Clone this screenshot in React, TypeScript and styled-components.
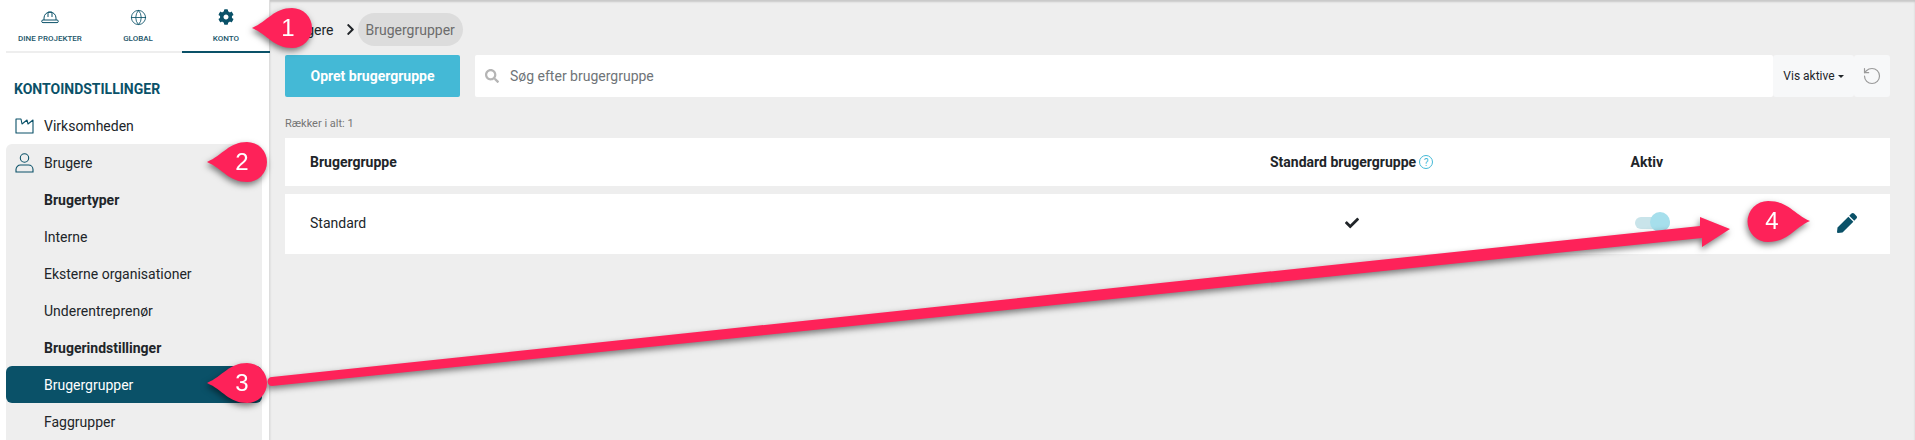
import React from 'react';
import styled, { createGlobalStyle } from 'styled-components';
import { FaCog, FaCheck, FaPen, FaSearch, FaChevronRight } from 'react-icons/fa';
import { Globe, RotateCcw } from 'lucide-react';

const PETROL = '#0a5168';
const TABLE_COLUMNS = '960px 163px 238px 1fr';

const GlobalStyle = createGlobalStyle`
  * { box-sizing: border-box; }
  html, body { margin: 0; padding: 0; height: 440px; overflow: hidden; }
  body { font-family: Roboto, "Liberation Sans", sans-serif; color: #212529; background: #eee; }
`;

const Page = styled.div`
  position: relative;
  display: flex;
  width: 1915px;
  height: 440px;
  overflow: hidden;
`;

const Sidebar = styled.aside`
  width: 270px;
  flex: none;
  background: #fff;
  border-right: 1px solid #ddd;
`;

const Tabs = styled.nav`
  display: grid;
  grid-template-columns: repeat(3, 1fr);
  height: 53px;
  margin: 0 -1px 0 6px;
`;

const Tab = styled.div<{ $active?: boolean }>`
  display: flex;
  flex-direction: column;
  align-items: center;
  padding-top: 6px;
  color: ${PETROL};
  border-bottom: 2px solid ${props => (props.$active ? PETROL : '#eee')};
`;

const TabIcon = styled.div`
  height: 22px;
  display: flex;
  align-items: center;
  justify-content: center;
`;

const TabLabel = styled.span`
  margin-top: 5px;
  font-size: 8px;
  line-height: 11px;
  font-weight: 500;
  color: #22566a;
`;

const SectionTitle = styled.h2`
  margin: 0;
  padding: 28px 0 0 14px;
  height: 54px;
  font-size: 14px;
  line-height: 17px;
  font-weight: 700;
  color: ${PETROL};
`;

const TopItem = styled.div`
  display: flex;
  align-items: center;
  gap: 10px;
  height: 37px;
  margin: 0 7px 0 6px;
  padding-left: 9px;
  font-size: 14px;
  color: #212529;
`;

const Group = styled.div`
  margin: 0 7px 0 6px;
  background: #eee;
  border-radius: 6px 6px 0 0;
  height: 300px;
`;

const GroupHead = styled(TopItem)`
  margin: 0;
`;

const SubItem = styled.div<{ $active?: boolean; $bold?: boolean }>`
  display: flex;
  align-items: center;
  height: 37px;
  padding-left: 38px;
  font-size: 14px;
  font-weight: ${props => (props.$bold ? 700 : 400)};
  color: ${props => (props.$active ? '#fff' : '#212529')};
  background: ${props => (props.$active ? PETROL : 'transparent')};
  border-radius: ${props => (props.$active ? '6px' : '0')};
`;

const Main = styled.main`
  flex: 1;
  min-width: 0;
  padding: 0 25px 0 15px;
  box-shadow: inset 0 2px 2px rgba(0, 0, 0, 0.16);
`;

const Breadcrumb = styled.div`
  display: flex;
  align-items: center;
  height: 33px;
  margin-top: 13px;
  font-size: 14px;
`;

const CrumbSeparator = styled.span`
  display: flex;
  margin: 0 1px 0 10px;
  color: #212529;
`;

const CrumbPill = styled.span`
  display: flex;
  align-items: center;
  height: 33px;
  padding: 0 8px;
  border-radius: 17px;
  background: #dcdcdc;
  color: #6c6c6c;
`;

const Toolbar = styled.div`
  display: flex;
  height: 42px;
  margin-top: 9px;
`;

const CreateButton = styled.button`
  width: 175px;
  border: 0;
  border-radius: 2px;
  margin-right: 15px;
  background: #44b9d6;
  color: #fff;
  font: 700 14px Roboto, sans-serif;
`;

const SearchBox = styled.div`
  flex: 1;
  display: flex;
  align-items: center;
  gap: 11px;
  padding-left: 10px;
  background: #fff;
  border-radius: 2px;
  font-size: 14px;
  color: #6f7478;
`;

const FilterButton = styled.div`
  display: flex;
  align-items: center;
  justify-content: center;
  gap: 3px;
  width: 81px;
  background: #f7f8f9;
  font-size: 12px;
  border-radius: 3px;
  color: #212529;
`;

const Caret = styled.span`
  width: 0;
  height: 0;
  border-left: 3px solid transparent;
  border-right: 3px solid transparent;
  border-top: 3px solid #212529;
`;

const ResetButton = styled.div`
  display: flex;
  align-items: center;
  justify-content: center;
  width: 36px;
  background: #f7f8f9;
  border-radius: 3px;
  color: #9a9a9a;
`;

const RowCount = styled.div`
  height: 41px;
  padding-top: 20px;
  font-size: 11px;
  line-height: 14px;
  color: #757575;
`;

const TableRow = styled.div<{ $height: number }>`
  display: grid;
  grid-template-columns: ${TABLE_COLUMNS};
  align-items: center;
  height: ${props => props.$height}px;
  margin-bottom: 8px;
  padding-left: 25px;
  background: #fff;
  font-size: 14px;
`;

const BodyRow = styled(TableRow)`
  padding-bottom: 2px;
`;

const HeadCell = styled.div`
  font-weight: 700;
`;

const HeadInfo = styled.div`
  display: flex;
  align-items: center;
  justify-content: space-between;
  font-weight: 700;
  white-space: nowrap;
`;

const HelpBadge = styled.span`
  display: flex;
  align-items: center;
  justify-content: center;
  width: 14px;
  height: 14px;
  border: 1.5px solid #44b9d6;
  border-radius: 50%;
  color: #44b9d6;
  font-size: 10px;
  font-weight: 400;
`;

const ActiveHead = styled.div`
  display: flex;
  justify-content: flex-end;
  padding-right: 8px;
  font-weight: 700;
`;

const CheckCell = styled.div`
  display: flex;
  justify-content: center;
  color: #212529;
`;

const ToggleCell = styled.div`
  display: flex;
  justify-content: flex-end;
  padding-right: 1px;
`;

const Toggle = styled.div`
  position: relative;
  width: 35px;
  height: 12px;
  border-radius: 6px;
  background: #c9e4ea;
  &::after {
    content: '';
    position: absolute;
    right: 0;
    top: -5px;
    width: 20px;
    height: 20px;
    border-radius: 50%;
    background: #a6dfec;
  }
`;

const EditCell = styled.div`
  display: flex;
  justify-content: flex-end;
  padding-right: 33px;
  color: ${PETROL};
`;

const Annotations = styled.svg`
  position: absolute;
  inset: 0;
  pointer-events: none;
  filter: drop-shadow(-1px 3px 3px rgba(0, 0, 0, 0.5));
`;

const PinNumber = styled.text`
  fill: #fff;
  font-family: "Liberation Sans", Arial, sans-serif;
  font-size: 24px;
  text-anchor: middle;
`;

const PIN_RED = '#fe2259';

const HelmetIcon = () => (
  <svg width="18" height="16" viewBox="0 0 18 16" fill="none" stroke={PETROL} strokeWidth="1">
    <path d="M3 11V9a6 6 0 0 1 12 0v2" />
    <path d="M7 3.5V8M11 3.5V8M7 3.2h4" />
    <rect x="0.7" y="11" width="16.6" height="2.6" rx="1.3" />
  </svg>
);

const FactoryIcon = () => (
  <svg width="19" height="16" viewBox="0 0 19 16" fill="none" stroke={PETROL} strokeWidth="1.1">
    <path d="M1 15V1h5l1 5 5-4 1 4 5-4v13z" strokeLinejoin="round" />
  </svg>
);

const UserIcon = () => (
  <svg width="19" height="20" viewBox="0 0 19 20" fill="none" stroke={PETROL} strokeWidth="1.1">
    <circle cx="9.5" cy="5" r="4.2" />
    <path d="M1 19v-2.5a4.500 4.500 0 0 1 4.500-4.500h8a4.500 4.500 0 0 1 4.500 4.500V19z" />
  </svg>
);

const PinLeft = ({ x, y, n, textX }: { x: number; y: number; n: number; textX: number }) => (
  <g>
    <path
      d={`M${x} ${y}C${x + 16} ${y - 7} ${x + 22} ${y - 20} ${x + 40} ${y - 20}a20 20 0 0 1 0 40C${x + 22} ${y + 20} ${x + 16} ${y + 7} ${x} ${y}Z`}
      fill={PIN_RED}
    />
    <PinNumber x={textX} y={y + 8}>{n}</PinNumber>
  </g>
);

const App: React.FC = () => {
  return (
    <Page>
      <GlobalStyle />
      <Sidebar>
        <Tabs>
          <Tab>
            <TabIcon><HelmetIcon /></TabIcon>
            <TabLabel>DINE PROJEKTER</TabLabel>
          </Tab>
          <Tab>
            <TabIcon><Globe size={17} strokeWidth={1.2} /></TabIcon>
            <TabLabel>GLOBAL</TabLabel>
          </Tab>
          <Tab $active>
            <TabIcon><FaCog size={16} /></TabIcon>
            <TabLabel>KONTO</TabLabel>
          </Tab>
        </Tabs>
        <SectionTitle>KONTOINDSTILLINGER</SectionTitle>
        <TopItem><FactoryIcon />Virksomheden</TopItem>
        <Group>
          <GroupHead><UserIcon />Brugere</GroupHead>
          <SubItem $bold>Brugertyper</SubItem>
          <SubItem>Interne</SubItem>
          <SubItem>Eksterne organisationer</SubItem>
          <SubItem>Underentreprenør</SubItem>
          <SubItem $bold>Brugerindstillinger</SubItem>
          <SubItem $active>Brugergrupper</SubItem>
          <SubItem>Faggrupper</SubItem>
        </Group>
      </Sidebar>
      <Main>
        <Breadcrumb>
          Brugere
          <CrumbSeparator><FaChevronRight size={13} /></CrumbSeparator>
          <CrumbPill>Brugergrupper</CrumbPill>
        </Breadcrumb>
        <Toolbar>
          <CreateButton>Opret brugergruppe</CreateButton>
          <SearchBox>
            <FaSearch size={14} color="#b5b5b5" />
            Søg efter brugergruppe
          </SearchBox>
          <FilterButton>Vis aktive<Caret /></FilterButton>
          <ResetButton><RotateCcw size={20} strokeWidth={1.4} /></ResetButton>
        </Toolbar>
        <RowCount>Rækker i alt: 1</RowCount>
        <TableRow $height={48}>
          <HeadCell>Brugergruppe</HeadCell>
          <HeadInfo>Standard brugergruppe<HelpBadge>?</HelpBadge></HeadInfo>
          <ActiveHead>Aktiv</ActiveHead>
          <div />
        </TableRow>
        <BodyRow $height={60}>
          <div>Standard</div>
          <CheckCell><FaCheck size={14} /></CheckCell>
          <ToggleCell><Toggle /></ToggleCell>
          <EditCell><FaPen size={20} /></EditCell>
        </BodyRow>
      </Main>
      <Annotations width="1915" height="440" viewBox="0 0 1915 440">
        <path d="M272 377L1700 226V217L1730 229L1702 247V238L272 386a4.500 4.500 0 0 1 0-9Z" fill={PIN_RED} />
        <PinLeft x={252} y={28} n={1} textX={288} />
        <PinLeft x={207} y={162} n={2} textX={242} />
        <PinLeft x={207} y={383} n={3} textX={242} />
        <g>
          <path
            d="M1810 221C1794 214 1788 201 1768 201a20.500 20.500 0 0 0 0 41C1788 242 1794 228 1810 221Z"
            fill={PIN_RED}
          />
          <PinNumber x={1772} y={229}>4</PinNumber>
        </g>
      </Annotations>
    </Page>
  );
};

export default App;
